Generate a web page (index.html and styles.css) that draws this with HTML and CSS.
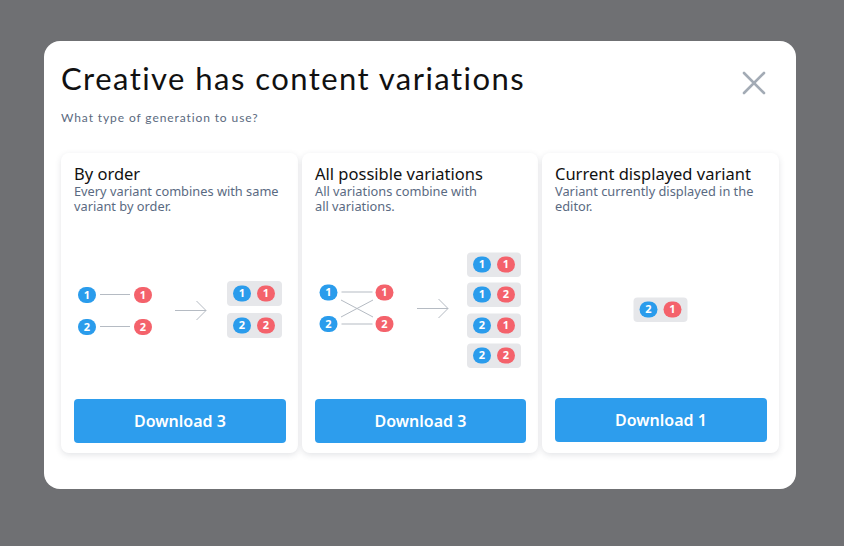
FILE: index.html
```html
<!DOCTYPE html>
<html>
<head>
<meta charset="utf-8">
<link rel="stylesheet" href="styles.css">
</head>
<body>
<div class="modal">
  <div class="modal-head">
    <div>
      <h1 class="title">Creative has content variations</h1>
      <p class="subtitle">What type of generation to use?</p>
    </div>
    <button class="close" aria-label="Close">
      <svg width="24" height="24" viewBox="0 0 24 24"><path d="M2 2 L22 22 M22 2 L2 22" stroke="#a3abb5" stroke-width="2.6" stroke-linecap="round" fill="none"/></svg>
    </button>
  </div>
  <div class="cards">
    <div class="card">
      <div class="card-head">
        <div class="card-title">By order</div>
        <div class="card-desc">Every variant combines with same variant by order.</div>
      </div>
      <svg class="diagram" viewBox="0 0 237 180" width="237" height="180">
        <g class="ln">
          <line x1="39" y1="81.5" x2="69" y2="81.5"/>
          <line x1="39" y1="113.5" x2="69" y2="113.5"/>
          <path d="M114 97.5 H145 M135.5 88 L145 97.5 L135.5 107" fill="none"/>
        </g>
        <g class="b"><rect x="17" y="74" width="18" height="16" rx="8"/><text x="26" y="85.5">1</text></g>
        <g class="r"><rect x="73" y="74" width="18" height="16" rx="8"/><text x="82" y="85.5">1</text></g>
        <g class="b"><rect x="17" y="106" width="18" height="16" rx="8"/><text x="26" y="117.5">2</text></g>
        <g class="r"><rect x="73" y="106" width="18" height="16" rx="8"/><text x="82" y="117.5">2</text></g>

        <rect class="pill" x="166" y="68" width="55" height="25" rx="4"/>
        <g class="b"><rect x="172" y="72.5" width="18" height="16" rx="8"/><text x="181" y="84">1</text></g>
        <g class="r"><rect x="196" y="72.5" width="18" height="16" rx="8"/><text x="205" y="84">1</text></g>
        <rect class="pill" x="166" y="100" width="55" height="25" rx="4"/>
        <g class="b"><rect x="172" y="104.5" width="18" height="16" rx="8"/><text x="181" y="116">2</text></g>
        <g class="r"><rect x="196" y="104.5" width="18" height="16" rx="8"/><text x="205" y="116">2</text></g>
      </svg>
      <button class="btn">Download 3</button>
    </div>

    <div class="card">
      <div class="card-head">
        <div class="card-title">All possible variations</div>
        <div class="card-desc">All variations combine with<br>all variations.</div>
      </div>
      <svg class="diagram" viewBox="0 0 237 180" width="237" height="180">
        <g class="ln">
          <line x1="39.5" y1="79" x2="70.5" y2="79"/>
          <line x1="39.5" y1="111" x2="70.5" y2="111"/>
          <line x1="39" y1="87" x2="71" y2="104"/>
          <line x1="39" y1="104" x2="71" y2="87"/>
          <path d="M115 95.5 H146 M136.5 86 L146 95.5 L136.5 105" fill="none"/>
        </g>
        <g class="b"><rect x="17.5" y="71.5" width="18" height="16" rx="8"/><text x="26.5" y="83">1</text></g>
        <g class="r"><rect x="73.5" y="71.5" width="18" height="16" rx="8"/><text x="82.5" y="83">1</text></g>
        <g class="b"><rect x="17.5" y="103" width="18" height="16" rx="8"/><text x="26.5" y="114.5">2</text></g>
        <g class="r"><rect x="73.5" y="103" width="18" height="16" rx="8"/><text x="82.5" y="114.5">2</text></g>

        <rect class="pill" x="165" y="39.5" width="54" height="24.5" rx="4"/>
        <g class="b"><rect x="171" y="43.5" width="18" height="16" rx="8"/><text x="180" y="55">1</text></g>
        <g class="r"><rect x="195" y="43.5" width="18" height="16" rx="8"/><text x="204" y="55">1</text></g>
        <rect class="pill" x="165" y="69.5" width="54" height="24.5" rx="4"/>
        <g class="b"><rect x="171" y="73.5" width="18" height="16" rx="8"/><text x="180" y="85">1</text></g>
        <g class="r"><rect x="195" y="73.5" width="18" height="16" rx="8"/><text x="204" y="85">2</text></g>
        <rect class="pill" x="165" y="100.5" width="54" height="24.5" rx="4"/>
        <g class="b"><rect x="171" y="104.5" width="18" height="16" rx="8"/><text x="180" y="116">2</text></g>
        <g class="r"><rect x="195" y="104.5" width="18" height="16" rx="8"/><text x="204" y="116">1</text></g>
        <rect class="pill" x="165" y="130.5" width="54" height="24.5" rx="4"/>
        <g class="b"><rect x="171" y="134.5" width="18" height="16" rx="8"/><text x="180" y="146">2</text></g>
        <g class="r"><rect x="195" y="134.5" width="18" height="16" rx="8"/><text x="204" y="146">2</text></g>
      </svg>
      <button class="btn">Download 3</button>
    </div>

    <div class="card">
      <div class="card-head">
        <div class="card-title">Current displayed variant</div>
        <div class="card-desc">Variant currently displayed in the editor.</div>
      </div>
      <svg class="diagram" viewBox="0 0 237 180" width="237" height="180">
        <rect class="pill" x="91.5" y="84.5" width="54" height="24.5" rx="4"/>
        <g class="b"><rect x="97.5" y="88.5" width="18" height="16" rx="8"/><text x="106.5" y="100">2</text></g>
        <g class="r"><rect x="121.5" y="88.5" width="18" height="16" rx="8"/><text x="130.5" y="100">1</text></g>
      </svg>
      <button class="btn btn-3">Download 1</button>
    </div>
  </div>
</div>
</body>
</html>
```
FILE: styles.css
```css
html, body {
  margin: 0;
  padding: 0;
}
body {
  background: #6f7073;
  width: 844px;
  height: 546px;
  overflow: hidden;
  font-family: "Noto Sans", "Open Sans", sans-serif;
}
.modal {
  box-sizing: border-box;
  width: 752px;
  height: 448px;
  margin: 41px 0 0 44px;
  background: #fff;
  border-radius: 16px;
  padding: 18px 17px 36px;
  display: flex;
  flex-direction: column;
}
.modal-head {
  display: flex;
  justify-content: space-between;
  align-items: flex-start;
}
.title {
  margin: 0;
  font-family: "Lato", sans-serif;
  font-weight: 400;
  font-size: 31px;
  line-height: 38px;
  color: #111;
  letter-spacing: 1.45px;
}
.subtitle {
  margin: 13px 0 0;
  font-family: "Lato", sans-serif;
  font-size: 12px;
  line-height: 16px;
  color: #5b6a80;
  letter-spacing: 0.9px;
}
.close {
  border: 0;
  background: none;
  padding: 0;
  margin: 12px 13px 0 0;
  width: 24px;
  height: 24px;
  cursor: pointer;
}
.close svg { display: block; }
.cards {
  margin-top: 27px;
  display: grid;
  grid-template-columns: 237px 236px 237px;
  gap: 4px;
  height: 300px;
}
.card {
  background: #fff;
  border-radius: 8px;
  box-shadow: 0 2px 6px rgba(40, 50, 70, 0.13);
  display: flex;
  flex-direction: column;
}
.card-head {
  padding: 10px 13px 0;
  height: 50px;
}
.card-title {
  font-size: 16.5px;
  line-height: 21px;
  color: #111;
}
.card-desc {
  font-size: 12.8px;
  line-height: 15px;
  color: #5a6a82;
}
.diagram {
  display: block;
  flex: none;
}
.ln line, .ln path {
  stroke: #b5bbc3;
  stroke-width: 1;
}
.pill { fill: #e6e7ea; }
.b rect { fill: #2a9cec; }
.r rect { fill: #f4626b; }
.b text, .r text {
  fill: #fff;
  font-family: "Noto Sans", sans-serif;
  font-weight: 700;
  font-size: 11px;
  text-anchor: middle;
}
.btn {
  margin: 6px 12px 0 13px;
  height: 44px;
  border: 0;
  border-radius: 4px;
  background: #2d9ded;
  color: #fff;
  font-family: "Noto Sans", sans-serif;
  font-weight: 600;
  font-size: 16px;
  cursor: pointer;
}
.btn-3 { margin-top: 5px; }
```
